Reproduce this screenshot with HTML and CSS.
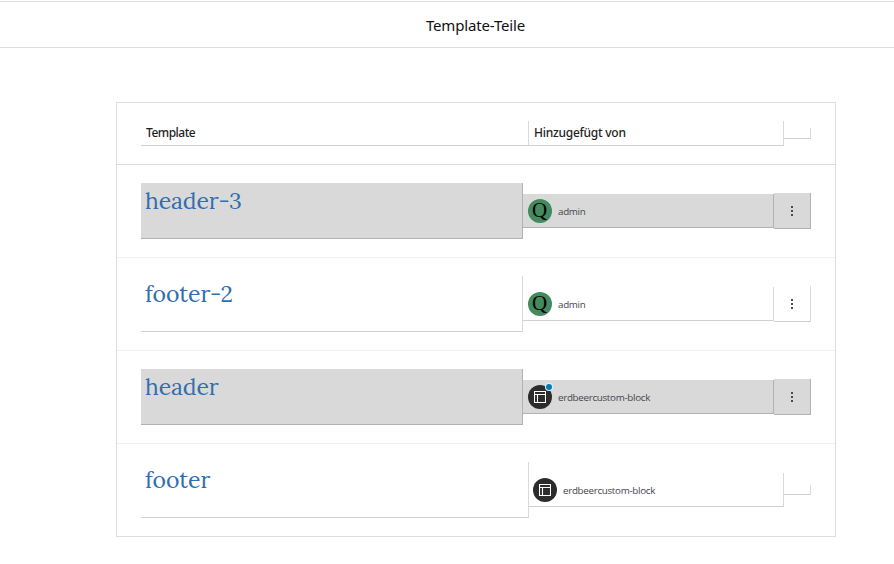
FILE: index.html
```html
<!DOCTYPE html>
<html lang="de">
<head>
  <meta charset="UTF-8">
  <meta name="viewport" content="width=device-width, initial-scale=1.0">
  <title>Template-Teile</title>
  <link rel="stylesheet" href="styles.css">
</head>
<body>
  <header class="page-header">
    <h1>Template-Teile</h1>
  </header>

  <main class="template-list">
    <div class="row row-head">
      <div class="cell cell-head"><span class="template-label">Template</span></div>
      <div class="cell cell-head"><span>Hinzugefügt von</span></div>
      <div class="cell cell-empty"></div>
    </div>

    <div class="row striped has-actions">
      <div class="cell cell-title"><a>header-3</a></div>
      <div class="cell cell-author">
        <span class="avatar avatar-user">Q</span>
        <span class="author">admin</span>
      </div>
      <div class="cell cell-actions">
        <svg class="dots" viewBox="0 0 4 12"><path d="M1 1h2v2H1zM1 5h2v2H1zM1 9h2v2H1z"/></svg>
      </div>
    </div>

    <div class="row has-actions">
      <div class="cell cell-title"><a>footer-2</a></div>
      <div class="cell cell-author">
        <span class="avatar avatar-user">Q</span>
        <span class="author">admin</span>
      </div>
      <div class="cell cell-actions">
        <svg class="dots" viewBox="0 0 4 12"><path d="M1 1h2v2H1zM1 5h2v2H1zM1 9h2v2H1z"/></svg>
      </div>
    </div>

    <div class="row striped has-actions">
      <div class="cell cell-title"><a>header</a></div>
      <div class="cell cell-author">
        <span class="avatar avatar-theme customized">
          <svg class="layout-icon" viewBox="0 0 12 12"><path d="M.5.5h11v11H.5zM.5 3.5h11M3.5 3.5v8"/></svg>
        </span>
        <span class="author">erdbeercustom-block</span>
      </div>
      <div class="cell cell-actions">
        <svg class="dots" viewBox="0 0 4 12"><path d="M1 1h2v2H1zM1 5h2v2H1zM1 9h2v2H1z"/></svg>
      </div>
    </div>

    <div class="row">
      <div class="cell cell-title"><a>footer</a></div>
      <div class="cell cell-author">
        <span class="avatar avatar-theme">
          <svg class="layout-icon" viewBox="0 0 12 12"><path d="M.5.5h11v11H.5zM.5 3.5h11M3.5 3.5v8"/></svg>
        </span>
        <span class="author">erdbeercustom-block</span>
      </div>
      <div class="cell cell-empty"></div>
    </div>
  </main>
</body>
</html>
```

FILE: styles.css
```css
* {
  box-sizing: border-box;
}
body {
  margin: 0;
  padding-top: 1px;
  background-color: #fff;
  color: #1e1e1e;
  font-family: "Noto Sans", "Open Sans", sans-serif;
}
.page-header {
  display: flex;
  align-items: center;
  justify-content: center;
  height: 47px;
  padding: 0 0 0 57px;
  border-top: 1px solid #ddd;
  border-bottom: 1px solid #ddd;
}
.page-header h1 {
  margin: 0;
  font-size: 15px;
  font-weight: 400;
  line-height: 20px;
  letter-spacing: -0.15px;
  color: #111;
}
.template-list {
  width: 720px;
  margin: 54px 0 0 116px;
  border: 1px solid #ddd;
}
.row {
  display: grid;
  grid-template-columns: 388px 255px 27px;
  align-items: center;
  height: 93px;
  padding: 0 24px;
  border-bottom: 1px solid #f0f0f0;
}
.row:last-child {
  height: 92px;
  border-bottom: none;
}
.row-head {
  height: 62px;
  border-bottom-color: #ddd;
}
.has-actions {
  grid-template-columns: 382px 251px 37px;
}
.cell {
  display: flex;
  align-items: center;
  border-right: 1px solid #d9d9d9;
  border-bottom: 1px solid #d0d0d0;
}
.striped .cell {
  background-color: #d9d9d9;
  border-color: #b2b2b2;
}
.cell-head {
  height: 25px;
  padding-left: 5px;
  font-size: 12px;
  font-weight: 500;
  line-height: 16px;
  letter-spacing: -0.25px;
}
.template-label {
  letter-spacing: -0.5px;
}
.cell-empty {
  height: 10px;
}
.row-head .cell-empty {
  height: 11px;
}
.cell-title {
  height: 56px;
  align-items: flex-start;
  padding: 3px 4px;
  font-family: Lora, "Liberation Serif", serif;
  font-size: 23px;
  line-height: 30px;
  letter-spacing: -0.1px;
  color: #306eaf;
}
.cell-author {
  height: 34px;
  padding-left: 5px;
}
.row:last-child .cell-author {
  padding-left: 4px;
}
.cell-actions {
  height: 36px;
  justify-content: center;
}
.avatar {
  display: flex;
  align-items: center;
  justify-content: center;
  position: relative;
  width: 24px;
  height: 24px;
  margin-right: 6px;
  border-radius: 50%;
}
.avatar-user {
  padding: 0 1px 1px 0;
  background-color: #438a5e;
  color: #000;
  font-family: "Liberation Serif", serif;
  font-size: 21px;
  line-height: 22px;
}
.avatar-theme {
  background-color: #2c2c2c;
}
.customized::after {
  content: "";
  position: absolute;
  top: -1px;
  right: 0;
  width: 6px;
  height: 6px;
  border-radius: 50%;
  background-color: #007cba;
  box-shadow: 0 0 0 1px #e8eef2;
}
.layout-icon {
  width: 12px;
  height: 12px;
  fill: none;
  stroke: #fff;
  stroke-width: 1.1;
}
.author {
  padding-top: 2px;
  font-family: "Open Sans", "Noto Sans", sans-serif;
  font-size: 9.8px;
  line-height: 16px;
  letter-spacing: -0.3px;
  color: #45454f;
}
.dots {
  width: 4px;
  height: 12px;
  fill: #4a4a4a;
}
```
